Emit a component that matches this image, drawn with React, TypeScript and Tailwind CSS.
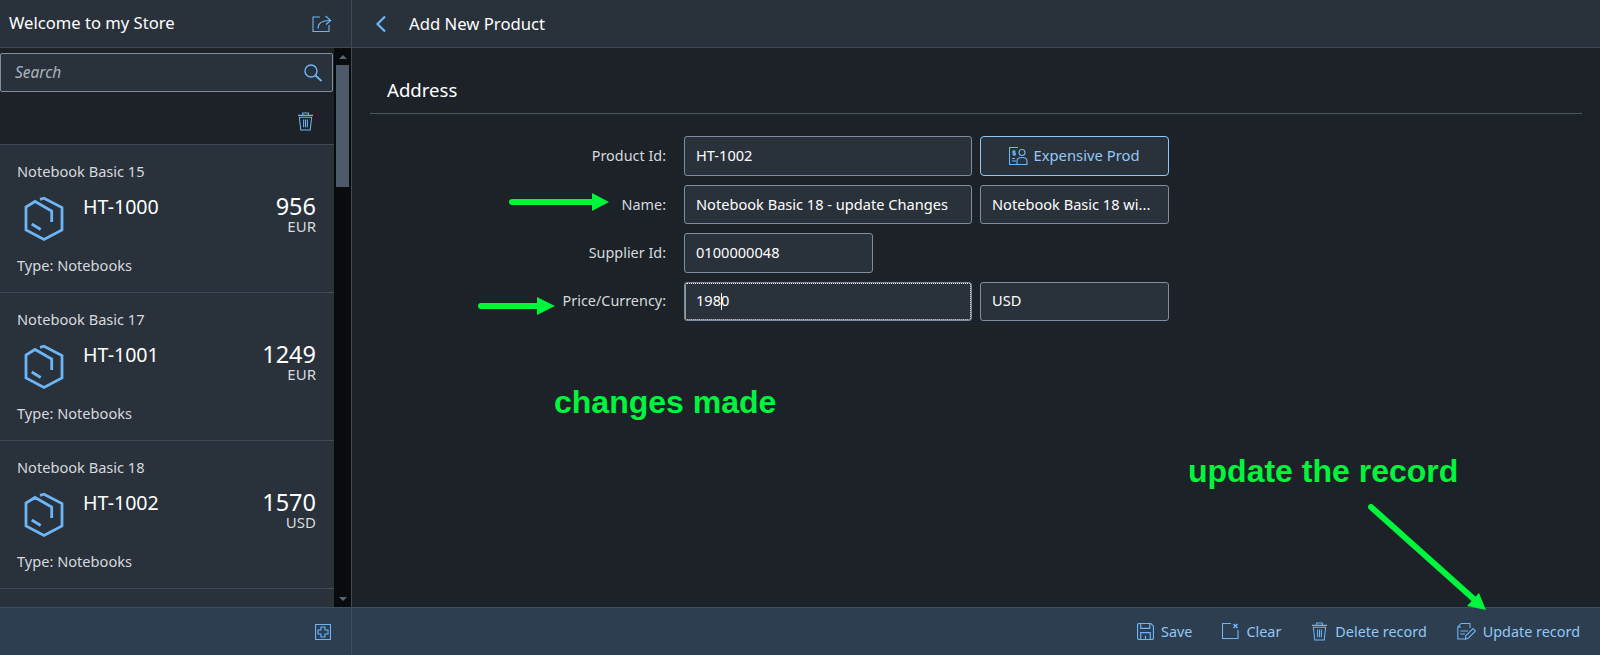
const products = [
  { title: 'Notebook Basic 15', id: 'HT-1000', price: '956', currency: 'EUR' },
  { title: 'Notebook Basic 17', id: 'HT-1001', price: '1249', currency: 'EUR' },
  { title: 'Notebook Basic 18', id: 'HT-1002', price: '1570', currency: 'USD' },
]

function ProductIcon() {
  return (
    <svg width="40" height="46" viewBox="0 0 40 46" fill="none" stroke="#6cb6f7" strokeWidth="2.8" className="shrink-0">
      <path d="M27.7 26 V15 L11 5.5 L2 11 V34 L20 43.5 L38 34 V11.5 L20 2.2 L16 3.4" />
      <path d="M7.7 28 L16.7 33.5" />
    </svg>
  )
}

function ShareIcon() {
  return (
    <svg width="20" height="18" viewBox="0 0 20 18" fill="none" stroke="#6cb6f7" strokeWidth="1.1">
      <path d="M8 2 H1 V16.5 H17 V10" />
      <path d="M6 13.5 C6 8 10 5.5 18 5.5" />
      <path d="M13.5 1 L18.7 5.5 L14 9.5" />
    </svg>
  )
}

function SearchIcon() {
  return (
    <svg width="18" height="18" viewBox="0 0 18 18" fill="none" stroke="#6cb6f7" strokeWidth="1.4">
      <circle cx="7" cy="7" r="6" />
      <path d="M11.5 11.5 L17.5 17" strokeWidth="1.8" />
    </svg>
  )
}

function TrashIcon() {
  return (
    <svg width="17" height="19" viewBox="0 0 18 20" fill="none" stroke="#6cb6f7" strokeWidth="1.1">
      <path d="M1 3.5 H17 M6 3.5 V1 H12 V3.5" />
      <path d="M2.5 5.5 L4 19 H14 L15.5 5.5 Z" />
      <path d="M7 8 V16 M9 8 V16 M11 8 V16" />
    </svg>
  )
}

function SaveIcon() {
  return (
    <svg width="17" height="17" viewBox="0 0 16 16" fill="none" stroke="#6cb6f7" strokeWidth="1.1">
      <path d="M0.5 2 Q0.5 0.5 2 0.5 H13 L15.5 3 V14 Q15.5 15.5 14 15.5 H2 Q0.5 15.5 0.5 14 Z" />
      <path d="M3.5 0.5 V5 H12 V0.5 M3.5 15.5 V9 H12.5 V15.5 M8 12 V15.5" />
    </svg>
  )
}

function ClearIcon() {
  return (
    <svg width="17" height="16" viewBox="0 0 17 16" fill="none" stroke="#6cb6f7" strokeWidth="1.1">
      <path d="M9 0.5 H0.5 V15.5 H16 V7" />
      <path d="M11.5 1 L15.5 5 M15.5 1 L11.5 5" strokeWidth="1.6" />
    </svg>
  )
}

function EditIcon() {
  return (
    <svg width="19" height="17" viewBox="0 0 19 17" fill="none" stroke="#6cb6f7" strokeWidth="1.1">
      <path d="M4 0.5 H13 V5 M4 0.5 L0.8 4 V16 H7" />
      <path d="M4 4 H0.8" />
      <path d="M3.5 8 H11 M3.5 11 H8" />
      <path d="M8 16.5 L9 12.5 L16 5.5 L18.5 8 L11.5 15 Z" />
    </svg>
  )
}

function ExpensiveIcon() {
  return (
    <svg width="19" height="18" viewBox="0 0 19 18" fill="none" stroke="#6cb6f7" strokeWidth="1.1">
      <path d="M9 0.5 H0.5 V17.5 H9" />
      <path d="M3 14 H7 M3 11.5 H6" />
      <path d="M5 3 V9 M6.5 4.2 H4 V6 H6.3 V7.8 H3.5" />
      <circle cx="13" cy="5.5" r="3" />
      <path d="M8 17.5 V14 Q8 10.5 13 10.5 Q18 10.5 18 14 V17.5 Z" />
    </svg>
  )
}

function AddIcon() {
  return (
    <svg width="16" height="16" viewBox="0 0 16 16" fill="none" stroke="#6cb6f7" strokeWidth="1.1">
      <path d="M0.5 0.5 H15.5 V15.5 H0.5 Z" />
      <path d="M6 3 H10 V6 H13 V10 H10 V13 H6 V10 H3 V6 H6 Z" />
    </svg>
  )
}

function Field({ value, className }: { value: string; className: string }) {
  return (
    <div className={`flex items-center px-[11px] bg-[#29313a] border border-[#7f8e9e] rounded-[3px] text-[14.6px] text-white whitespace-nowrap ${className}`}>
      {value}
    </div>
  )
}

function Label({ text, className }: { text: string; className?: string }) {
  return <div className={`w-[314px] pr-[18px] text-right text-[14.4px] text-[#d6dade] ${className ?? ''}`}>{text}</div>
}

function FooterAction({ icon, text }: { icon: React.ReactNode; text: string }) {
  return (
    <div className="flex items-center gap-[7px] text-[14.4px] text-[#91c8f6]">
      {icon}
      <span>{text}</span>
    </div>
  )
}

export default function App() {
  return (
    <div className="relative flex flex-col h-[655px] w-[1600px] overflow-hidden bg-[#1c2228] font-['Noto_Sans',sans-serif]">
      <div className="flex flex-1 min-h-0">
        {/* left list */}
        <div className="flex flex-col w-[352px] shrink-0 border-r border-[#3e4a57]">
          <div className="flex items-center justify-between h-[48px] shrink-0 pl-[9px] pr-[19px] bg-[#29313a] border-b border-[#3e4a57]">
            <span className="text-[16.6px] text-white">Welcome to my Store</span>
            <ShareIcon />
          </div>
          <div className="flex flex-1 min-h-0">
            <div className="flex-1 min-w-0 overflow-hidden">
              <div className="flex flex-col h-[96px] pt-[5px]">
                <div className="flex items-center justify-between h-[39px] w-[333px] pl-[14px] pr-[10px] bg-[#29313a] border border-[#7f8e9e] rounded-[2px]">
                  <span className="text-[15.5px] italic text-[#a9b4be]">Search</span>
                  <SearchIcon />
                </div>
                <div className="flex justify-end pt-[20px] pr-[20px]">
                  <TrashIcon />
                </div>
              </div>
              <div className="h-full bg-[#29313a]">
                {products.map((p) => (
                  <div key={p.id} className="h-[148px] pt-[16px] pl-[17px] pr-[18px] border-t border-[#3e4a57]">
                    <div className="text-[14.6px] leading-[20px] text-[#d6dade]">{p.title}</div>
                    <div className="flex mt-[9px] h-[56px]">
                      <div className="ml-[7px] pt-[6px]">
                        <ProductIcon />
                      </div>
                      <div className="ml-[19px] pt-[5px] text-[19.6px] leading-[24px] text-white">{p.id}</div>
                      <div className="ml-auto flex flex-col items-end pt-[3px]">
                        <span className="text-[23.5px] leading-[26px] text-white">{p.price}</span>
                        <span className="-mt-px text-[15px] leading-[16px] text-[#d6dade]">{p.currency}</span>
                      </div>
                    </div>
                    <div className="mt-[9px] text-[14.6px] leading-[20px] text-[#d6dade]">Type: Notebooks</div>
                  </div>
                ))}
                <div className="border-t border-[#3e4a57]" />
              </div>
            </div>
            {/* scrollbar */}
            <div className="flex flex-col items-center justify-between w-[17px] shrink-0 bg-[#0a0b0c] pt-[7px] pb-[6px]">
              <div className="flex flex-col items-center w-full">
                <div className="w-0 h-0 border-x-[4px] border-x-transparent border-b-[4px] border-b-[#5a6674]" />
                <div className="mt-[6px] w-[13px] h-[122px] bg-[#4e5a69]" />
              </div>
              <div className="w-0 h-0 border-x-[4px] border-x-transparent border-t-[4px] border-t-[#5a6674]" />
            </div>
          </div>
        </div>

        {/* main */}
        <div className="flex flex-col flex-1 min-w-0">
          <div className="flex items-center h-[48px] shrink-0 pl-[23px] bg-[#29313a] border-b border-[#3e4a57]">
            <svg width="12" height="18" viewBox="0 0 12 18" fill="none" stroke="#6cb6f7" strokeWidth="2.2">
              <path d="M10 1.5 L2.5 9 L10 16.5" />
            </svg>
            <span className="ml-[22px] text-[16.7px] text-white">Add New Product</span>
          </div>
          <div className="pl-[18px] pr-[18px] pt-[19px]">
            <div className="h-[47px] pl-[17px] border-b border-[#4b5663] text-[18.6px] leading-[46px] text-white">Address</div>
            <div className="flex flex-col gap-[9px] pt-[22px]">
              <div className="flex items-center h-[40px]">
                <Label text="Product Id:" />
                <Field value="HT-1002" className="w-[288px] h-[40px]" />
                <div className="flex items-center justify-center gap-[5px] ml-[8px] pb-px w-[189px] h-[40px] bg-[#29313a] border border-[#91c8f6] rounded-[4px] text-[14.8px] text-[#91c8f6]">
                  <ExpensiveIcon />
                  <span>Expensive Prod</span>
                </div>
              </div>
              <div className="flex items-center h-[39px]">
                <Label text="Name:" />
                <Field value="Notebook Basic 18 - update Changes" className="w-[288px] h-[39px]" />
                <Field value="Notebook Basic 18 wi..." className="ml-[8px] w-[189px] h-[39px]" />
              </div>
              <div className="flex items-center h-[40px]">
                <Label text="Supplier Id:" />
                <Field value="0100000048" className="w-[189px] h-[40px]" />
              </div>
              <div className="flex items-center h-[39px]">
                <Label text="Price/Currency:" className="pb-px" />
                <div className="flex items-center px-[11px] pb-px w-[288px] h-[39px] bg-[#29313a] border border-[#7f8e9e] rounded-[3px] outline-1 outline-dotted outline-white -outline-offset-2 text-[14.6px] text-white">
                  <span>198</span>
                  <span className="w-px h-[17px] -mr-px bg-white" />
                  <span>0</span>
                </div>
                <Field value="USD" className="ml-[8px] pb-px w-[189px] h-[39px]" />
              </div>
            </div>
          </div>
        </div>
      </div>

      {/* footer */}
      <div className="flex h-[48px] shrink-0 bg-[#2c3e50] border-t border-[#3e4f60]">
        <div className="flex items-center justify-end w-[352px] shrink-0 pr-[20px] border-r border-[#3e4f60]">
          <AddIcon />
        </div>
        <div className="flex flex-1 items-center justify-end gap-[30px] pr-[20px]">
          <FooterAction icon={<SaveIcon />} text="Save" />
          <FooterAction icon={<ClearIcon />} text="Clear" />
          <FooterAction icon={<TrashIcon />} text="Delete record" />
          <FooterAction icon={<EditIcon />} text="Update record" />
        </div>
      </div>

      {/* green annotations over the screenshot */}
      <div className="absolute left-[554px] top-[384px] text-[32px] font-bold leading-[36px] text-[#00f53d] font-['Liberation_Sans',sans-serif]">changes made</div>
      <div className="absolute left-[1188px] top-[453px] text-[32px] font-bold leading-[36px] text-[#00f53d] font-['Liberation_Sans',sans-serif]">update the record</div>
      <svg className="absolute inset-0 pointer-events-none" width="1600" height="655" fill="#00f53d" stroke="none">
        <path d="M512 202 H594" stroke="#00f53d" strokeWidth="6" strokeLinecap="round" />
        <path d="M592 193 L609 202 L592 211 Z" />
        <path d="M481 306 H539" stroke="#00f53d" strokeWidth="6" strokeLinecap="round" />
        <path d="M537 297 L555 306 L537 315 Z" />
        <path d="M1371 507 L1476 601" stroke="#00f53d" strokeWidth="6" strokeLinecap="round" />
        <path d="M1479 593 L1486 610 L1467 606 Z" />
      </svg>
    </div>
  )
}
